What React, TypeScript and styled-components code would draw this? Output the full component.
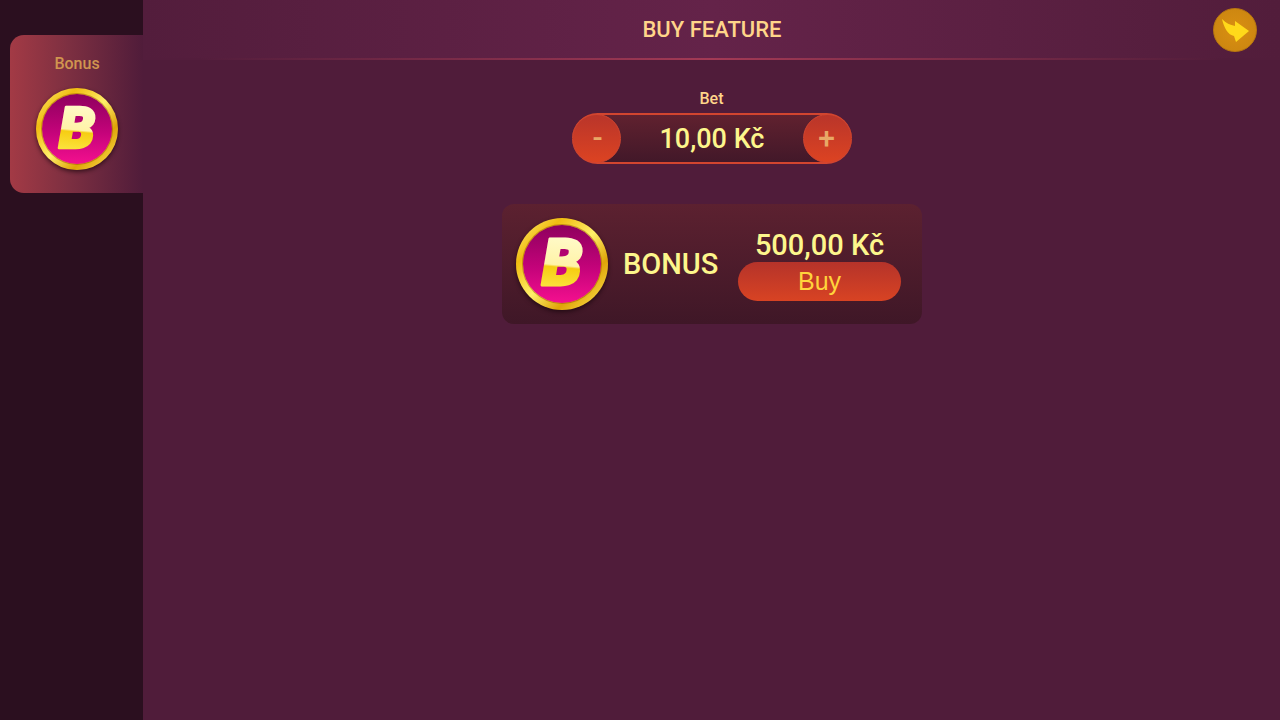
import React from 'react';
import styled, { createGlobalStyle } from 'styled-components';

const GlobalStyle = createGlobalStyle`
  html, body {
    margin: 0;
    height: 100%;
    background: #501c3a;
    font-family: Roboto, 'Liberation Sans', sans-serif;
  }
  #root {
    height: 100%;
  }
`;

const Page = styled.div`
  display: flex;
  width: 1280px;
  height: 720px;
  overflow: hidden;
`;

const Sidebar = styled.aside`
  flex: 0 0 143px;
  box-sizing: border-box;
  padding: 35px 0 0 10px;
  background: #2b0f1f;
`;

const Tab = styled.div`
  box-sizing: border-box;
  display: flex;
  flex-direction: column;
  align-items: center;
  height: 158px;
  padding: 20px 0 0 1px;
  gap: 15px;
  border-radius: 14px 0 0 14px;
  background: linear-gradient(90deg, #a33a45 0%, #7c2f41 45%, #501c3a 100%);
`;

const TabLabel = styled.div`
  font-size: 16px;
  line-height: 18px;
  font-weight: 500;
  color: #d0954f;
`;

const Main = styled.main`
  flex: 1;
  display: flex;
  flex-direction: column;
  align-items: center;
`;

const Header = styled.header`
  box-sizing: border-box;
  align-self: stretch;
  display: grid;
  grid-template-columns: 1fr auto 1fr;
  align-items: center;
  height: 60px;
  padding: 2px 23px 0;
  background: linear-gradient(90deg, #531d3c 0%, #642349 50%, #521d3b 100%);
  border-bottom: 2px solid;
  border-image: linear-gradient(90deg, #531d3c 5%, #a33a55 50%, #521d3b 95%) 1;
`;

const Title = styled.h1`
  grid-column: 2;
  margin: 0 0 1px 1px;
  font-size: 22px;
  font-weight: 500;
  color: #ffd58a;
`;

const CloseButton = styled.button`
  justify-self: end;
  display: flex;
  align-items: center;
  justify-content: center;
  width: 44px;
  height: 44px;
  padding: 0 0 0 1px;
  border: 1px solid #b9770f;
  border-radius: 50%;
  background: radial-gradient(circle, #d98f12 0%, #c98410 100%);
`;

const BetLabel = styled.div`
  margin: 30px 0 5px;
  font-size: 16px;
  line-height: 18px;
  font-weight: 500;
  color: #ffd58a;
`;

const Stepper = styled.div`
  box-sizing: border-box;
  display: flex;
  align-items: center;
  justify-content: space-between;
  width: 280px;
  height: 51px;
  margin-left: 1px;
  border: 2px solid #d2452f;
  border-left: 0;
  border-right: 0;
  border-radius: 26px;
  background: linear-gradient(180deg, #60212f 0%, #421829 100%);
`;

const StepButton = styled.button`
  width: 49px;
  height: 49px;
  padding: 0 0 2px;
  border: 1px solid #d2452f;
  border-radius: 50%;
  background: linear-gradient(180deg, #b9352a 0%, #dc4322 100%);
  font-family: Roboto, sans-serif;
  font-size: 30px;
  font-weight: 500;
  line-height: 1;
  color: #e8a866;

  &:first-child {
    padding-left: 2px;
  }

  &:last-child {
    padding-right: 2px;
  }
`;

const BetValue = styled.div`
  font-size: 27px;
  font-weight: 500;
  color: #fdf68c;
`;

const Card = styled.section`
  box-sizing: border-box;
  display: flex;
  align-items: center;
  width: 420px;
  height: 120px;
  margin: 40px 0 0 1px;
  padding: 0 21px 0 14px;
  border-radius: 12px;
  background: linear-gradient(180deg, #5c2130 0%, #3f1727 100%);
`;

const CardName = styled.div`
  margin-left: 15px;
  font-size: 29px;
  font-weight: 500;
  color: #fdf68c;
`;

const CardAction = styled.div`
  margin-left: auto;
  display: flex;
  flex-direction: column;
  align-items: center;
  width: 163px;
`;

const Price = styled.div`
  font-size: 29px;
  line-height: 34px;
  font-weight: 500;
  color: #fdf68c;
`;

const BuyButton = styled.button`
  width: 163px;
  height: 39px;
  padding: 0;
  border: 0;
  border-radius: 20px;
  background: linear-gradient(180deg, #b5332a 0%, #d84323 100%);
  font-family: 'Liberation Sans', Arial, sans-serif;
  font-size: 25px;
  color: #ffd33c;
`;

const CoinRing = styled.div<{ $size: number }>`
  flex: none;
  box-sizing: border-box;
  display: flex;
  width: ${p => p.$size}px;
  height: ${p => p.$size}px;
  padding: ${p => Math.round(p.$size * 0.075)}px;
  border-radius: 50%;
  background: linear-gradient(135deg, #fff27a 0%, #f0bc10 25%, #fff06a 50%, #dfa408 72%, #ffec5a 100%);
  box-shadow: 0 2px 4px rgba(20, 5, 10, 0.65);
`;

const CoinFace = styled.div`
  flex: 1;
  border-radius: 50%;
  background: linear-gradient(180deg, #8e005e 0%, #c4037a 55%, #f4108f 100%);
  box-shadow: 0 0 0 1px rgba(150, 90, 0, 0.5);
`;

const CoinLetter = styled.text`
  font-family: Roboto, 'Liberation Sans', sans-serif;
  font-size: 64px;
  font-weight: 900;
  font-style: italic;
`;

// the letter gets a stroke of its own gradient, the game logo is heavier than Roboto Black
const Coin = ({ size, id }: { size: number; id: string }) => (
  <CoinRing $size={size}>
    <CoinFace>
      <svg width="100%" height="100%" viewBox="0 0 78 78" style={{ display: 'block' }}>
        <defs>
          <linearGradient id={id} x1="0.05" y1="0" x2="0" y2="1">
            <stop offset="0" stopColor="#fffcd2" />
            <stop offset="0.5" stopColor="#fff3a8" />
            <stop offset="0.53" stopColor="#f6cd12" />
            <stop offset="1" stopColor="#fff35c" />
          </linearGradient>
        </defs>
        <CoinLetter
          x="39"
          y="60"
          textAnchor="middle"
          fill={`url(#${id})`}
          stroke={`url(#${id})`}
          strokeWidth="3"
          strokeLinejoin="round"
        >
          B
        </CoinLetter>
      </svg>
    </CoinFace>
  </CoinRing>
);

const App = () => (
  <Page>
    <GlobalStyle />
    <Sidebar>
      <Tab>
        <TabLabel>Bonus</TabLabel>
        <Coin size={82} id="coin-tab" />
      </Tab>
    </Sidebar>
    <Main>
      <Header>
        <Title>BUY FEATURE</Title>
        <CloseButton aria-label="Back">
          <svg width="27" height="23" viewBox="0 0 27 23">
            <path
              d="M0 0 C4 4 8 6 13 7 L13 2 L27 12 L14 23 L12 17 C6 16 2 9 0 0 Z"
              fill="#ffd91a"
            />
          </svg>
        </CloseButton>
      </Header>
      <BetLabel>Bet</BetLabel>
      <Stepper>
        <StepButton>-</StepButton>
        <BetValue>10,00 Kč</BetValue>
        <StepButton>+</StepButton>
      </Stepper>
      <Card>
        <Coin size={92} id="coin-card" />
        <CardName>BONUS</CardName>
        <CardAction>
          <Price>500,00 Kč</Price>
          <BuyButton>Buy</BuyButton>
        </CardAction>
      </Card>
    </Main>
  </Page>
);

export default App;
